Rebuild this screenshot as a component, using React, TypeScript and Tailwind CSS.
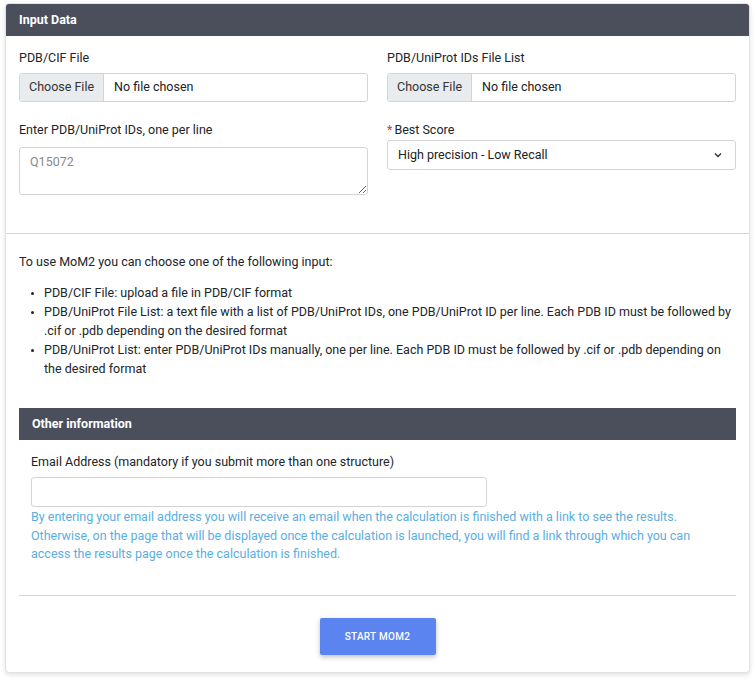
import React from 'react';

const FileInput: React.FC = () => (
  <div className="flex h-[29px] w-full overflow-hidden rounded-[3px] border border-[#d4d4d4] bg-white">
    <div className="flex items-center border-r border-[#d4d4d4] bg-[#e9ecef] px-[9px] text-[#333]">Choose File</div>
    <div className="flex items-center px-[10px] text-[#222]">No file chosen</div>
  </div>
);

export default function App() {
  return (
    <div className="min-h-screen bg-white px-[5px] pt-[3px] font-['Roboto',sans-serif] text-[12.5px] text-[#212529]">
      <div className="overflow-hidden rounded-[4px] border border-[#e2e2e2] bg-white pb-[17px] shadow-[0_2px_5px_rgba(0,0,0,0.12)]">
        {/* Input Data */}
        <div className="flex h-[32px] items-center bg-[#4b4f5b] px-[13px] font-bold text-white">Input Data</div>

        <div className="grid grid-cols-2 gap-x-[19px] px-[13px] pt-[13px] pb-[38px]">
          <div>
            <div className="mb-[6px] leading-[18px]">PDB/CIF File</div>
            <FileInput />
          </div>
          <div>
            <div className="mb-[6px] leading-[18px]">PDB/UniProt IDs File List</div>
            <FileInput />
          </div>
          <div className="pt-[19px]">
            <div className="mb-[8px] leading-[18px]">Enter PDB/UniProt IDs, one per line</div>
            <textarea
              className="block h-[48px] w-full resize-y rounded-[3px] border border-[#d4d4d4] px-[10px] py-[5px] text-[#333] placeholder:text-[#8a8a8a] outline-none"
              placeholder="Q15072"
            />
          </div>
          <div className="pt-[19px]">
            <div className="mb-[1px] leading-[18px]">
              <span className="mr-[2px] text-[#e03131]">*</span>Best Score
            </div>
            <div className="flex h-[30px] items-center justify-between rounded-[3px] border border-[#d4d4d4] px-[10px] text-[#222]">
              <span>High precision - Low Recall</span>
              <svg width="10" height="10" viewBox="0 0 10 10" className="mr-[2px]">
                <path d="M2 3.5 L5 6.5 L8 3.5" fill="none" stroke="#333" strokeWidth="1.4" />
              </svg>
            </div>
          </div>
        </div>

        <div className="border-t border-[#d6d6d6]" />

        <div className="px-[13px] pt-[18px] pb-[30px] leading-[19px]">
          <p>To use MoM2 you can choose one of the following input:</p>
          <ul className="mt-[12px] list-disc pl-[25px] marker:text-[10px]">
            <li>PDB/CIF File: upload a file in PDB/CIF format</li>
            <li>
              PDB/UniProt File List: a text file with a list of PDB/UniProt IDs, one PDB/UniProt ID per line. Each PDB ID must be followed by .cif or .pdb depending on the desired format
            </li>
            <li>
              PDB/UniProt List: enter PDB/UniProt IDs manually, one per line. Each PDB ID must be followed by .cif or .pdb depending on the desired format
            </li>
          </ul>
        </div>

        <div className="px-[13px]">
          <div className="flex h-[32px] items-center bg-[#4b4f5b] px-[13px] font-bold text-white">Other information</div>
          <div className="px-[12px] pt-[13px] pb-[31px]">
            <div className="mb-[6px] leading-[18px]">Email Address (mandatory if you submit more than one structure)</div>
            <input className="block h-[30px] w-[456px] rounded-[3px] border border-[#d4d4d4] px-[10px] outline-none" />
            <p className="mt-[1px] leading-[18.5px] text-[#5aaee0]">
              By entering your email address you will receive an email when the calculation is finished with a link to see the results. Otherwise, on the page that will be displayed once the calculation is launched, you will find a link through which you can access the results page once the calculation is finished.
            </p>
          </div>
          <div className="border-t border-[#d6d6d6]" />
          <div className="flex justify-center pt-[22px]">
            <button className="h-[37px] w-[116px] rounded-[2px] bg-[#5b84f1] text-[10px] font-medium tracking-[0.3px] text-white shadow-[0_2px_5px_rgba(0,0,0,0.25)]">
              START MOM2
            </button>
          </div>
        </div>
      </div>
    </div>
  );
}
